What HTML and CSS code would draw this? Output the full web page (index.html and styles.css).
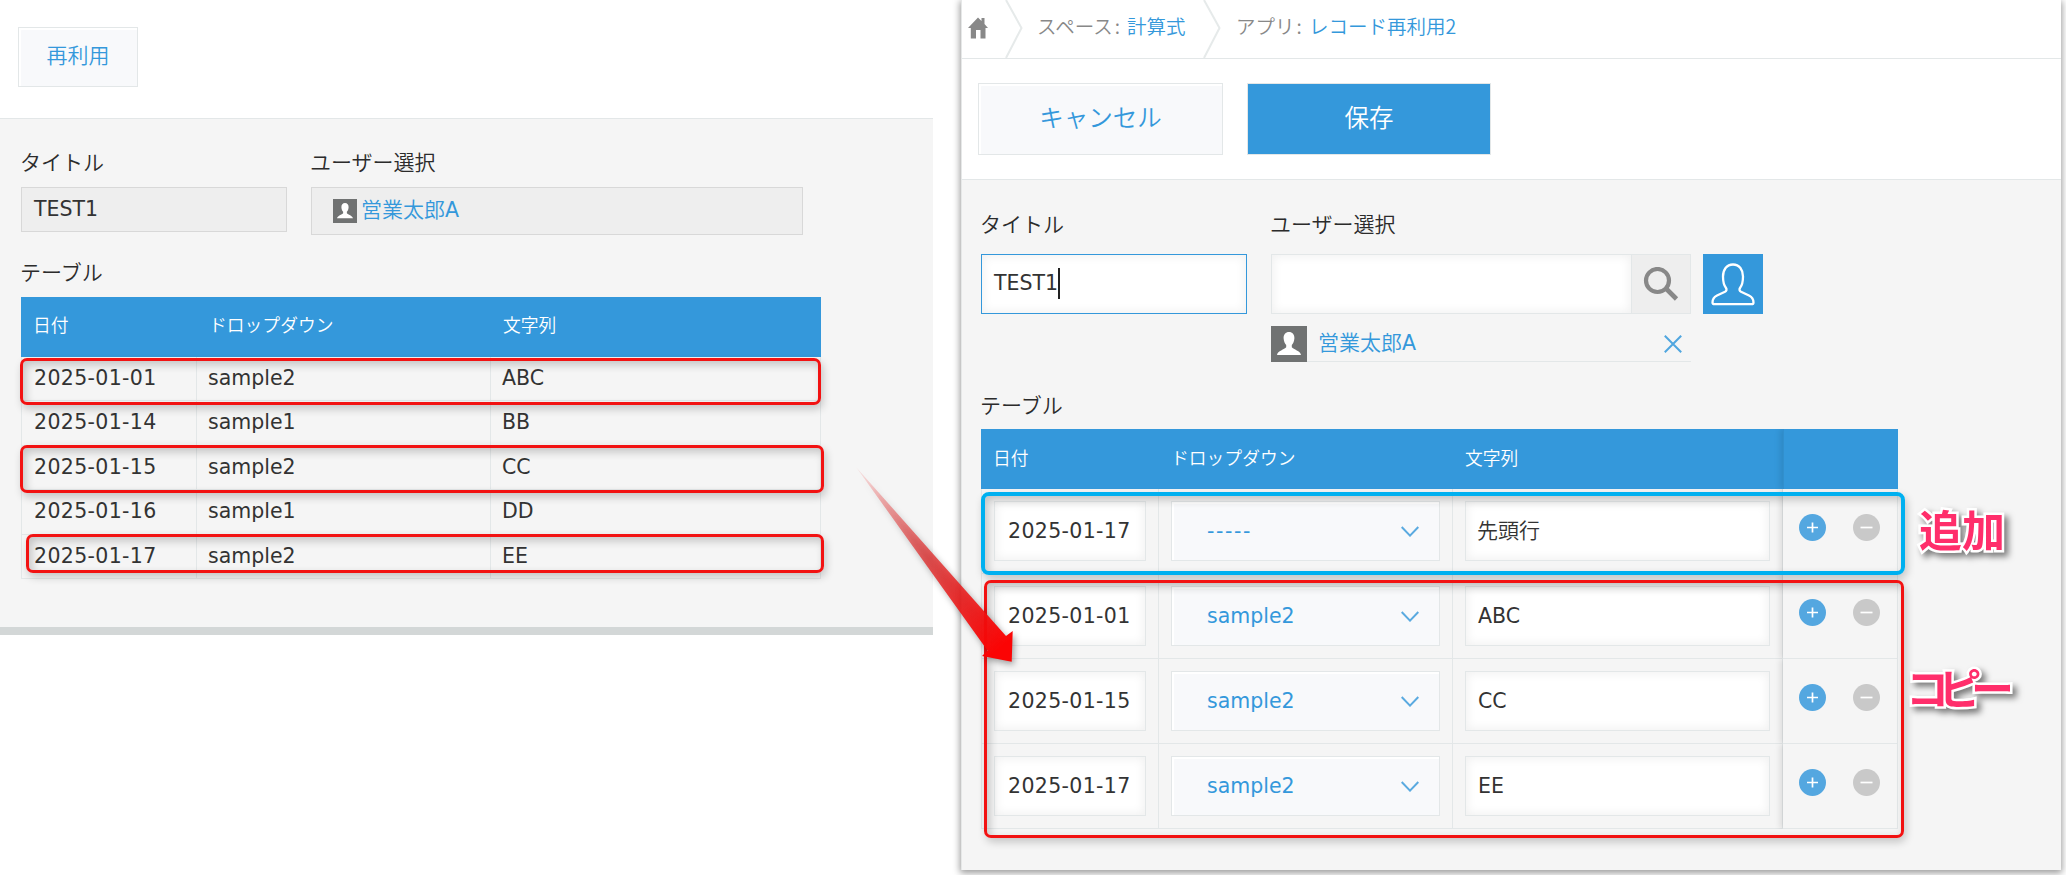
FILE: index.html
```html
<!DOCTYPE html>
<html lang="ja">
<head>
<meta charset="utf-8">
<title>レコード再利用</title>
<link rel="stylesheet" href="styles.css">
</head>
<body>
<svg class="defs" width="0" height="0">
  <symbol id="person" viewBox="0 0 36 36"><path fill="#fff" d="M18 6c3.4 0 5.6 2.6 5.4 6.200c-.2 3-1.200 5.300-2.600 6.800v2.200c1.600 2.200 8.700 3.600 9.200 7.800H6c.5-4.200 7.600-5.600 9.200-7.800V19c-1.400-1.500-2.400-3.800-2.600-6.800C12.400 8.600 14.600 6 18 6z"/></symbol>
  <symbol id="chev" viewBox="0 0 18 11"><path fill="none" stroke="#5aaae0" stroke-width="2" d="M.7 1L9 9.600L17.300 1"/></symbol>
  <symbol id="plus" viewBox="0 0 27 27"><circle cx="13.500" cy="13.500" r="13.500" fill="#54a7e0"/><path stroke="#fff" stroke-width="1.700" d="M8 13.500h11M13.500 8.500v10"/></symbol>
  <symbol id="minus" viewBox="0 0 27 27"><circle cx="13.500" cy="13.500" r="13.500" fill="#c9c9c9"/><path stroke="#fff" stroke-width="1.700" d="M7.500 13.500h12"/></symbol>
</svg>
<div class="page">
  <section class="view">
    <div class="view-bar"><button class="btn reuse">再利用</button></div>
    <div class="view-body">
      <div class="fields">
        <div class="field-title"><div class="label">タイトル</div><div class="value">TEST1</div></div>
        <div class="field-user"><div class="label">ユーザー選択</div>
          <div class="value user"><span class="avatar small"><svg width="24" height="24"><use href="#person"/></svg></span><span class="uname">営業太郎<span class="lat">A</span></span></div></div>
      </div>
      <div class="label table-label">テーブル</div>
      <div class="vtable">
        <div class="vrow head"><span>日付</span><span>ドロップダウン</span><span>文字列</span></div>
        <div class="vrow"><span class="date">2025-01-01</span><span>sample2</span><span>ABC</span></div>
        <div class="vrow"><span class="date">2025-01-14</span><span>sample1</span><span>BB</span></div>
        <div class="vrow"><span class="date">2025-01-15</span><span>sample2</span><span>CC</span></div>
        <div class="vrow"><span class="date">2025-01-16</span><span>sample1</span><span>DD</span></div>
        <div class="vrow"><span class="date">2025-01-17</span><span>sample2</span><span>EE</span></div>
      </div>
    </div>
  </section>

  <section class="edit">
    <nav class="crumbs">
      <svg class="home" width="20" height="22" viewBox="0 0 20 22"><path fill="#888" d="M10 .5L13.500 4V1H16.500V7L20 11H17.500V21.500H12.500V13H8V21.500H2.800V11H0z"/></svg>
      <svg class="sep" width="18" height="58" viewBox="0 0 18 58"><path fill="none" stroke="#e6eaea" stroke-width="2" d="M1 0L16.500 28L1 58"/></svg>
      <span class="crumb space">スペース<i>:</i> <a>計算式</a></span>
      <svg class="sep" width="18" height="58" viewBox="0 0 18 58"><path fill="none" stroke="#e6eaea" stroke-width="2" d="M1 0L16.500 28L1 58"/></svg>
      <span class="crumb app">アプリ<i>:</i> <a>レコード再利用2</a></span>
    </nav>
    <div class="edit-bar"><button class="btn cancel">キャンセル</button><button class="btn save">保存</button></div>
    <div class="edit-body">
      <div class="efields">
        <div class="field-title"><div class="label">タイトル</div><div class="input focus">TEST1<span class="caret"></span></div></div>
        <div class="field-user"><div class="label">ユーザー選択</div>
          <div class="picker">
            <div class="input search"></div>
            <div class="lens"><svg width="36" height="34" viewBox="0 0 36 34"><circle cx="14.500" cy="13.500" r="11.500" fill="none" stroke="#888" stroke-width="4.200"/><path stroke="#888" stroke-width="4.600" d="M23 21.500L33.500 32"/></svg></div>
            <div class="pick"><svg width="46" height="46" viewBox="0 0 46 46"><path fill="none" stroke="#fff" stroke-width="2.300" stroke-linejoin="round" d="M23 2.500C29.500 2.500 33 8 33 14.500C33 20 32 23.500 30 26C29 27.500 29.500 29 31 29.800L39 33.500C43 35.500 43.500 38 43.500 40.500Q43.500 42.200 41.500 42.200H4.500Q2.500 42.200 2.500 40.500C2.500 38 3 35.500 7 33.500L15 29.800C16.500 29 17 27.500 16 26C14 23.500 13 20 13 14.500C13 8 16.500 2.500 23 2.500z"/></svg></div>
          </div>
          <div class="chosen"><span class="avatar"><svg width="36" height="36"><use href="#person"/></svg></span><span class="uname">営業太郎<span class="lat">A</span></span>
            <svg class="remove" width="18" height="18" viewBox="0 0 18 18"><path stroke="#50a6df" stroke-width="2" d="M.8 .8L17.200 17.200M17.200 .8L.8 17.200"/></svg></div>
        </div>
      </div>
      <div class="label table-label">テーブル</div>
      <div class="etable">
        <div class="erow head"><div>日付</div><div>ドロップダウン</div><div>文字列</div><div class="act"></div></div>
        <div class="erow"><div><span class="input date">2025-01-17</span></div><div><span class="drop"><b class="none">-----</b><svg width="18" height="11"><use href="#chev"/></svg></span></div><div><span class="input jp">先頭行</span></div><div class="act"><svg width="27" height="27"><use href="#plus"/></svg><svg width="27" height="27"><use href="#minus"/></svg></div></div>
        <div class="erow"><div><span class="input date">2025-01-01</span></div><div><span class="drop"><b>sample2</b><svg width="18" height="11"><use href="#chev"/></svg></span></div><div><span class="input">ABC</span></div><div class="act"><svg width="27" height="27"><use href="#plus"/></svg><svg width="27" height="27"><use href="#minus"/></svg></div></div>
        <div class="erow"><div><span class="input date">2025-01-15</span></div><div><span class="drop"><b>sample2</b><svg width="18" height="11"><use href="#chev"/></svg></span></div><div><span class="input">CC</span></div><div class="act"><svg width="27" height="27"><use href="#plus"/></svg><svg width="27" height="27"><use href="#minus"/></svg></div></div>
        <div class="erow"><div><span class="input date">2025-01-17</span></div><div><span class="drop"><b>sample2</b><svg width="18" height="11"><use href="#chev"/></svg></span></div><div><span class="input">EE</span></div><div class="act"><svg width="27" height="27"><use href="#plus"/></svg><svg width="27" height="27"><use href="#minus"/></svg></div></div>
      </div>
    </div>
  </section>

  <div class="mark m1"></div>
  <div class="mark m2"></div>
  <div class="mark m3"></div>
  <div class="mark m4"></div>
  <div class="mark m5"></div>
  <svg class="arrow" width="200" height="230" viewBox="840 450 200 230">
    <defs><linearGradient id="fade" gradientUnits="userSpaceOnUse" x1="856" y1="467" x2="1000" y2="648"><stop offset="0" stop-color="#e00" stop-opacity="0.050"/><stop offset=".5" stop-color="#e02828" stop-opacity=".76"/><stop offset="1" stop-color="#fb0404"/></linearGradient></defs>
    <path fill="url(#fade)" d="M856 467L1006 636L1012.700 631L1011.700 661.700L982 656L987.500 650.500z"/>
  </svg>
  <div class="note add">追加</div>
  <div class="note copy">コピー</div>
</div>
</body>
</html>
```

FILE: styles.css
```css
* { box-sizing: border-box; }
body { margin: 0; background: #fff; color: #333; font-family: "DejaVu Sans", "Noto Sans CJK JP", sans-serif; font-size: 20.5px; overflow: hidden; }
.defs { position: absolute; }
svg { display: block; flex: none; }
.page { position: relative; width: 2066px; height: 875px; display: flex; align-items: flex-start; gap: 28px; overflow: hidden; }
.btn { margin: 0; padding: 0; border: 1px solid #e3e7e8; background: #f8f9fb; color: #3498db; font-family: "Noto Sans CJK JP", sans-serif; font-weight: 350; box-shadow: inset 2px 2px 1px #fff; white-space: nowrap; }
.label { font-family: "Noto Sans CJK JP", sans-serif; font-size: 21px; line-height: 30px; height: 30px; font-weight: 350; white-space: nowrap; text-indent: -1px; color: #2b2b2b; }
.uname { color: #3498db; font-family: "Noto Sans CJK JP", sans-serif; font-size: 21px; font-weight: 350; line-height: 30px; white-space: nowrap; }
.lat { font-family: "DejaVu Sans", sans-serif; font-size: 20.5px; font-weight: 400; }
.avatar { background: #707272; display: block; flex: none; }
.date { letter-spacing: .35px; }

/* record view */
.view { width: 933px; height: 635px; border-bottom: 8px solid #d3d7d7; background: #f5f5f5; }
.view-bar { height: 119px; background: #fff; border-bottom: 1px solid #e3e7e8; padding: 27px 18px; }
.reuse { width: 120px; height: 60px; font-size: 21px; padding-bottom: 6px; }
.view-body { padding: 27px 21px 0; }
.fields { display: flex; gap: 24px; height: 106px; }
.fields .label { margin-bottom: 11px; }
.field-title { width: 266px; }
.value { border: 1px solid #d8d8d8; background: #eee; height: 45px; padding: 0 12px; line-height: 43px; }
.value.user { width: 492px; height: 48px; padding: 11px 21px; display: flex; gap: 4px; }
.value.user .uname { margin-top: -6px; }
.table-label { margin: 4px 0 11px; }
.vtable { width: 800px; }
.vrow { display: grid; grid-template-columns: 176px 294px 330px; height: 44.4px; }
.vrow span { border-right: 1px solid #e3e7e8; border-bottom: 1px solid #e3e7e8; padding: 0 11px; line-height: 43px; }
.vrow span:first-child { border-left: 1px solid #e3e7e8; padding-left: 12px; }
.vrow.head, .erow.head { height: 60px; background: #3498db; color: #fff; font-family: "Noto Sans CJK JP", sans-serif; font-size: 17.8px; font-weight: 350; }
.vrow.head span, .vrow.head span:first-child { border: 0; padding-left: 12px; line-height: 54px; }

/* record editor */
.edit { width: 1100px; height: 870px; background: #f5f5f5; border-left: 1px solid #e6e8e8; box-shadow: 0 2px 7px 1px rgba(0,0,0,.4); display: flex; flex-direction: column; }
.crumbs { height: 59px; background: #fff; border-bottom: 1px solid #e3e7e8; display: flex; padding-left: 6px; flex: none; }
.home { margin: 17px 17px 0 0; }
.crumb { font-family: "Noto Sans CJK JP", sans-serif; font-size: 19.5px; font-weight: 350; line-height: 51px; color: #888; white-space: nowrap; }
.crumb i { font-style: normal; display: inline-block; width: 9px; padding-left: 2px; }
.crumb a { color: #3498db; margin-left: 1px; }
.space { width: 166px; margin-left: 14px; }
.app { margin-left: 15px; }
.edit-bar { height: 121px; background: #fff; border-bottom: 1px solid #e3e7e8; display: flex; gap: 24px; padding: 24px 16px; flex: none; }
.edit-bar .btn { height: 72px; font-size: 24.5px; padding-bottom: 6px; }
.cancel { width: 245px; }
.edit-bar .save { width: 244px; background: #3498db; color: #fff; box-shadow: none; }
.edit-body { padding: 28px 19px 0; }
.efields { display: flex; gap: 24px; height: 181px; }
.efields .label { margin-bottom: 16px; }
.input { display: flex; align-items: center; height: 60px; background: #fff; border: 1px solid #e3e7e8; box-shadow: inset 0 0 10px 2px #f2f2f2; padding: 0 12px 1px; white-space: nowrap; }
.input.focus { border-color: #3498db; padding-bottom: 2px; }
.caret { width: 2px; height: 31px; background: #222; }
.picker { display: flex; width: 492px; }
.search { width: 361px; }
.lens { width: 60px; height: 60px; margin-left: -1px; border: 1px solid #e3e7e8; background: #eee; padding: 12px 0 0 11px; }
.pick { width: 60px; height: 60px; margin-left: 12px; background: #3498db; padding: 8px 7px; }
.chosen { width: 420px; height: 36px; margin-top: 12px; border-bottom: 1px solid #e3e7e8; display: flex; gap: 11px; }
.chosen .avatar { height: 36px; }
.remove { margin: 9px 9px 0 auto; }
.edit .table-label { margin: 0 0 10px; }
.etable { width: 917px; }
.erow { display: grid; grid-template-columns: 178px 294px 330px 115px; height: 85px; }
.erow > div { border-right: 1px solid #e3e7e8; border-bottom: 1px solid #e3e7e8; padding: 12px 12px 0; }
.erow > div:first-child { border-left: 1px solid #e3e7e8; }
.erow.head > div { border: 0; padding: 0 12px; line-height: 56px; }
.erow.head > .act { border-left: 1px solid #318fce; }
.erow > .act { display: flex; gap: 27px; padding: 25px 0 0 16px; box-shadow: -3px 0 6px rgba(0,0,0,.1); clip-path: inset(0 0 0 -9px); }
.input.date { padding-left: 13px; }
.input.jp { font-size: 21px; padding: 0 11px 4px; font-weight: 350; font-family: "Noto Sans CJK JP", sans-serif; }
.drop { display: flex; justify-content: space-between; align-items: center; height: 60px; border: 1px solid #e3e7e8; background: #f8f9fb; color: #3498db; padding: 0 20px 0 35px; box-shadow: inset 2px 2px 1px #fff; }
.drop b { font-weight: 400; }
.drop .none { letter-spacing: 1.6px; }

/* call-outs lying over the two screens */
.mark { position: absolute; border: 3px solid #f21212; border-radius: 7px; box-shadow: 2px 4px 8px rgba(0,0,0,.2), inset 3px 4px 8px rgba(0,0,0,.2); }
.m1 { left: 20px; top: 358px; width: 801px; height: 47px; }
.m2 { left: 20px; top: 445px; width: 804px; height: 48px; }
.m3 { left: 26px; top: 534px; width: 798px; height: 39px; }
.m4 { left: 981px; top: 492px; width: 924px; height: 83px; border: 4px solid #00b0f0; border-radius: 8px; }
.m5 { left: 984px; top: 580px; width: 920px; height: 258px; }
.arrow { position: absolute; left: 840px; top: 450px; filter: drop-shadow(2px 3px 3px rgba(0,0,0,.35)); }
.note { position: absolute; font-family: "Noto Sans CJK JP", sans-serif; font-weight: 700; font-size: 43px; line-height: 60px; color: #ff2e6b; white-space: nowrap; -webkit-text-stroke: 5px #fff; paint-order: stroke fill; filter: drop-shadow(4px 4px 3px rgba(0,0,0,.5)); }
.add { left: 1919px; top: 498px; }
.copy { left: 1906px; top: 656px; letter-spacing: -10.5px; }
```
